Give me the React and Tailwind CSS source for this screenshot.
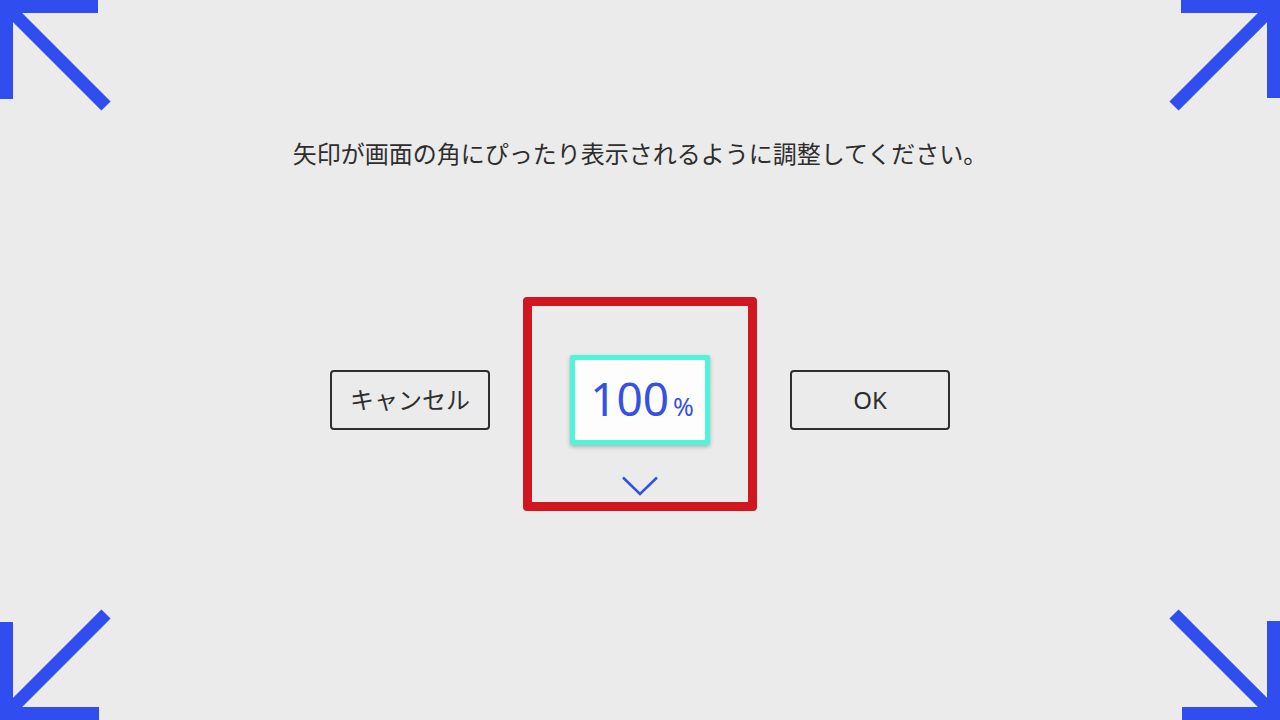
import { useState } from "react";

function CornerArrow({ className }) {
  // drawn as the top-left arrow; the others are rotated copies
  return (
    <svg width="112" height="112" viewBox="0 0 112 112" className={className}>
      <rect x="0" y="0" width="98" height="13" fill="#304ef0" />
      <rect x="0" y="0" width="13" height="99" fill="#304ef0" />
      <line x1="6" y1="6" x2="106" y2="106" stroke="#304ef0" strokeWidth="13" />
    </svg>
  );
}

export default function App() {
  const [scale, setScale] = useState(100);

  return (
    <div
      className="relative w-[1280px] h-[720px] bg-[#ebebeb] overflow-hidden text-[#2e2e2e]"
      style={{ fontFamily: '"Noto Sans", "Noto Sans CJK JP", sans-serif' }}
    >
      {/* corner markers */}
      <CornerArrow className="absolute top-0 left-0" />
      <CornerArrow className="absolute top-0 right-0 rotate-90" />
      <CornerArrow className="absolute bottom-0 left-0 -rotate-90" />
      <CornerArrow className="absolute bottom-0 right-0 rotate-180" />

      <div className="flex flex-col items-center pt-[138px]">
        <p className="text-[24px] leading-[32px]">
          矢印が画面の角にぴったり表示されるように調整してください。
        </p>

        <div className="flex items-start gap-[33px] mt-[127px]">
          <button className="mt-[73px] w-[160px] h-[60px] border-2 border-[#2e2e2e] rounded-[4px] text-[24px]">
            キャンセル
          </button>

          <div className="w-[234px] h-[214px] border-[9px] border-[#d0161e] rounded-[4px] flex flex-col items-center pt-[49px]">
            <div className="w-[140px] h-[90px] bg-[#fdfdfd] border-[5px] border-[#4ef5da] rounded-[2px] shadow-[0_2px_4px_rgba(0,0,0,0.25)] flex items-baseline justify-center pt-[12px] pl-[4px]">
              <span className="text-[46px] leading-[52px] text-[#3550e4]">{scale}</span>
              <span className="text-[25px] ml-[4px] text-[#3550e4]">%</span>
            </div>
            <button
              className="mt-[31px]"
              onClick={() => setScale((s) => Math.max(s - 1, 0))}
            >
              <svg width="36" height="20" viewBox="0 0 36 20" className="block">
                <polyline
                  points="1,1.5 18,18 35,1.5"
                  fill="none"
                  stroke="#3550e4"
                  strokeWidth="2.5"
                />
              </svg>
            </button>
          </div>

          <button className="mt-[73px] w-[160px] h-[60px] border-2 border-[#2e2e2e] rounded-[4px] text-[24px]">
            OK
          </button>
        </div>
      </div>
    </div>
  );
}
